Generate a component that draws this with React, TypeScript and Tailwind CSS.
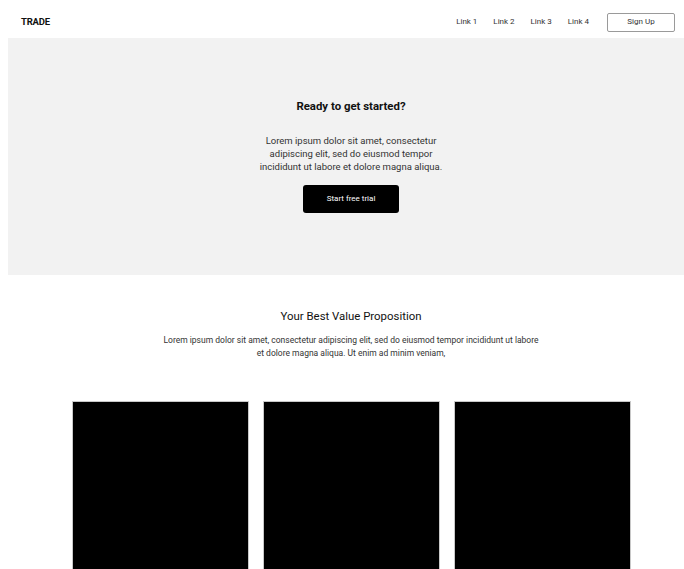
import React from "react";

export default function App() {
  const font = { fontFamily: "Roboto, 'Liberation Sans', sans-serif" };
  return (
    <div className="w-[684px] h-[569px] overflow-hidden bg-white text-[#111]" style={font}>
      <header className="h-[38px] flex items-center justify-between pl-[21px] pr-[9px] pt-[6px]">
        <div className="text-[9.5px] font-bold tracking-[-0.2px]">TRADE</div>
        <div className="flex items-center">
          <nav className="flex items-center gap-[16px] text-[8px] text-[#333]">
            <span>Link 1</span>
            <span>Link 2</span>
            <span>Link 3</span>
            <span>Link 4</span>
          </nav>
          <button className="ml-[18px] w-[68px] h-[19px] border border-[#9a9a9a] rounded-[2px] text-[8px] font-normal text-[#333] bg-white flex items-center justify-center">
            Sign Up
          </button>
        </div>
      </header>
      <section className="ml-[8px] w-[686px] h-[237px] bg-[#f2f2f2] flex flex-col items-center pt-[61px]">
        <h2 className="text-[11.4px] font-bold leading-[14px]">Ready to get started?</h2>
        <p className="mt-[21px] text-[9.5px] leading-[13px] text-[#333] text-center">
          Lorem ipsum dolor sit amet, consectetur
          <br />
          adipiscing elit, sed do eiusmod tempor
          <br />
          incididunt ut labore et dolore magna aliqua.
        </p>
        <button className="mt-[12px] w-[96px] h-[28px] bg-black text-white text-[8px] font-normal rounded-[3px] flex items-center justify-center">
          Start free trial
        </button>
      </section>
      <section className="ml-[8px] w-[686px] flex flex-col items-center pt-[34px]">
        <h2 className="text-[11.4px] leading-[14px] text-[#111]">Your Best Value Proposition</h2>
        <p className="mt-[11px] text-[8.5px] leading-[13px] text-[#333] text-center">
          Lorem ipsum dolor sit amet, consectetur adipiscing elit, sed do eiusmod tempor incididunt ut labore
          <br />
          et dolore magna aliqua. Ut enim ad minim veniam,
        </p>
        <div className="mt-[41px] flex gap-[14px]">
          <div className="w-[177px] h-[200px] bg-black border border-[#c8c8c8]" />
          <div className="w-[177px] h-[200px] bg-black border border-[#c8c8c8]" />
          <div className="w-[177px] h-[200px] bg-black border border-[#c8c8c8]" />
        </div>
      </section>
    </div>
  );
}
